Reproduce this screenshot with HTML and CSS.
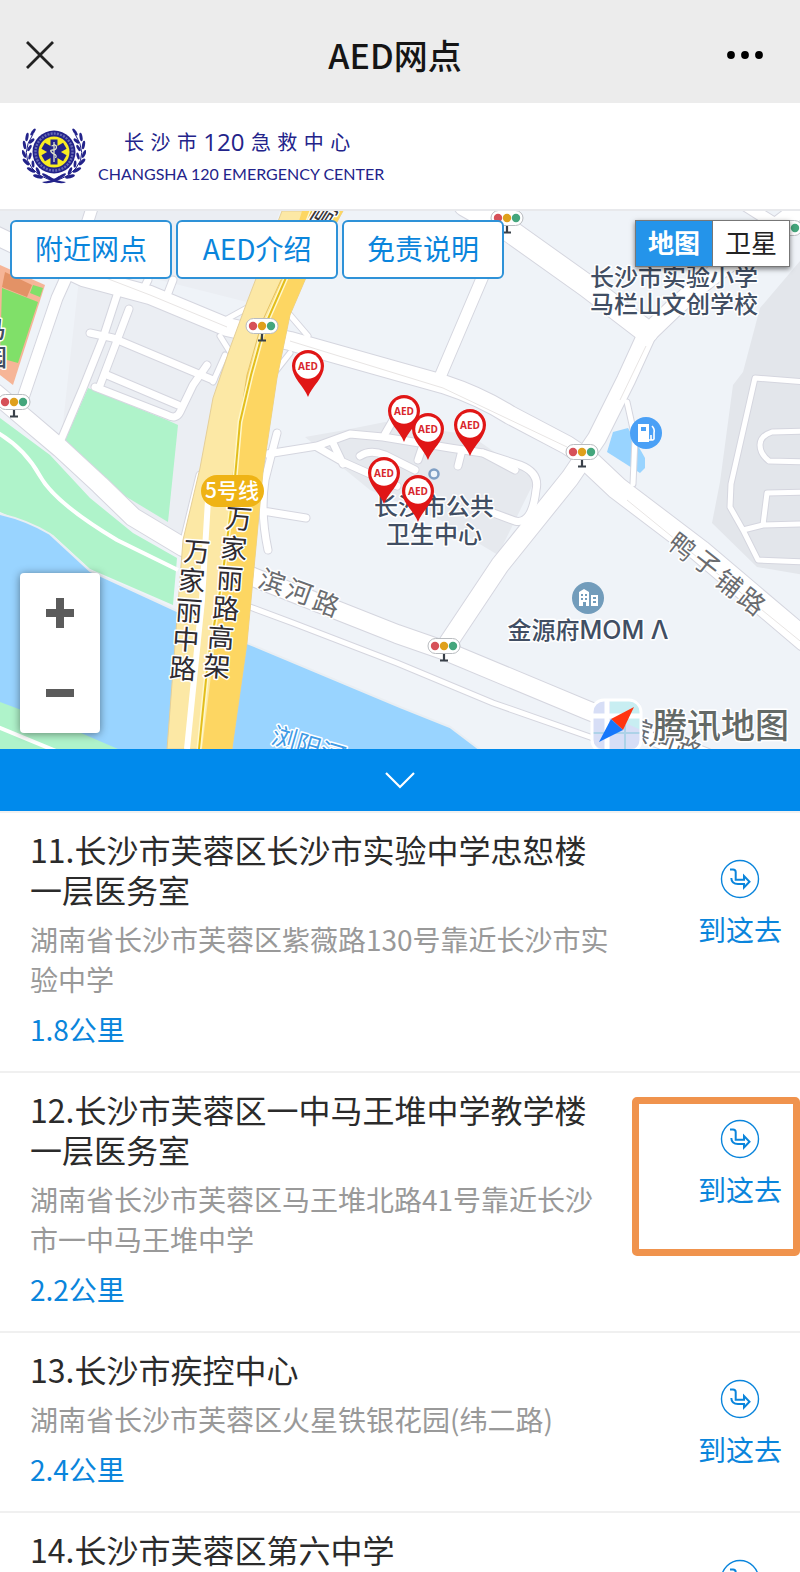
FILE: index.html
```
<!DOCTYPE html>
<html lang="zh-CN">
<head>
<meta charset="utf-8">
<meta name="viewport" content="width=device-width, initial-scale=1">
<title>AED网点</title>
<link rel="stylesheet" href="styles.css">
</head>
<body>
<header class="topbar">
  <button class="icon-btn" type="button" aria-label="关闭">
    <svg width="28" height="28" viewBox="0 0 28 28"><path d="M1 1 27 27M27 1 1 27" fill="none" stroke="#222" stroke-width="2.8"/></svg>
  </button>
  <h1 class="topbar-title">AED网点</h1>
  <button class="icon-btn icon-btn-end" type="button" aria-label="更多">
    <svg width="38" height="10" viewBox="0 0 38 10"><circle cx="5" cy="5" r="3.9"/><circle cx="19" cy="5" r="3.9"/><circle cx="33" cy="5" r="3.9"/></svg>
  </button>
</header>

<div class="brand">
  <svg class="brand-emblem" width="64" height="56" viewBox="0 0 64 56">
    <g id="wreath" fill="#23238a">
      <path d="M11 6Q-2 26 10 40Q18 50 33 53" fill="none" stroke="#23238a" stroke-width="1"/>
      <ellipse cx="11" cy="4" rx="1.5" ry="4" transform="rotate(35 11 4)"/>
      <ellipse cx="5" cy="9" rx="1.5" ry="4.2" transform="rotate(10 5 9)"/>
      <ellipse cx="9.500" cy="13" rx="1.500" ry="3.600" transform="rotate(50 9.500 13)"/>
      <ellipse cx="2.500" cy="17" rx="1.500" ry="4.200" transform="rotate(-10 2.500 17)"/>
      <ellipse cx="7.500" cy="20" rx="1.400" ry="3.600" transform="rotate(30 7.500 20)"/>
      <ellipse cx="2" cy="26" rx="1.500" ry="4.200" transform="rotate(-25 2 26)"/>
      <ellipse cx="8" cy="28" rx="1.400" ry="3.600" transform="rotate(15 8 28)"/>
      <ellipse cx="4" cy="34" rx="1.600" ry="4.400" transform="rotate(-45 4 34)"/>
      <ellipse cx="11" cy="36" rx="1.400" ry="3.600" transform="rotate(-5 11 36)"/>
      <ellipse cx="9" cy="42" rx="1.600" ry="4.600" transform="rotate(-62 9 42)"/>
      <ellipse cx="16" cy="43" rx="1.500" ry="4" transform="rotate(-25 16 43)"/>
      <ellipse cx="16" cy="48.500" rx="1.800" ry="5" transform="rotate(-76 16 48.500)"/>
      <ellipse cx="24" cy="48" rx="1.500" ry="4.500" transform="rotate(-58 24 48)"/>
      <path d="M20 54Q30 53 37 48L39 50Q32 56 22 55Z"/>
    </g>
    <use href="#wreath" transform="matrix(-1 0 0 1 64 0)"/>
    <circle cx="32" cy="24" r="21.500" fill="#23238a"/>
    <circle cx="32" cy="24" r="18.500" fill="none" stroke="#6569b5" stroke-width="2.400" stroke-dasharray="2 1.200"/>
    <circle cx="32" cy="24" r="15.500" fill="#f8ec22"/>
    <g fill="#23238a"><path id="bar" d="M28.500 11.500h7v25h-7z"/><use href="#bar" transform="rotate(60 32 24)"/><use href="#bar" transform="rotate(120 32 24)"/></g>
    <path d="M32 14v20M29.500 18q5-2 5 1t-4 3 1 4q4 1 2 4" fill="none" stroke="#dfe2c8" stroke-width="1.300"/>
  </svg>
  <div class="brand-names">
    <div class="brand-cn"><span>长</span><span>沙</span><span>市</span><span class="brand-num">120</span><span>急</span><span>救</span><span>中</span><span>心</span></div>
    <div class="brand-en">CHANGSHA 120 EMERGENCY CENTER</div>
  </div>
</div>

<main>
<section class="map" aria-label="地图">
  <svg class="map-canvas" viewBox="0 211 800 538" preserveAspectRatio="xMidYMid slice">
    <defs>
      <g id="roads">
        <g class="w22">
          <path d="M465 205 507 229 587 286 647 332"/>
          <path d="M582 455 617 488 700 551 805 640"/>
        </g>
        <g class="w20">
          <path d="M-5 235 83 277 150 295 227 327 290 341 400 372 443 384Q480 396 510 415L567 445 582 455"/>
          <path d="M805 205 700 285 673 309 647 334 626 380 597 438 570 478 500 565 446 646"/>
          <path d="M-5 393 27 420 60 448 100 485 133 517 183 547 253 577 397 634 443 650 587 710 705 757"/>
        </g>
        <g class="w12">
          <path d="M93 205 85 230M66 278 57 298 24 395"/>
          <path d="M483 276 440 377M745 205 772 222"/>
        </g>
        <g class="w8">
          <path d="M117 295 103 338 83 388 58 447"/>
          <path d="M129 309 118 338 99 388M90 333 113 338 213 380"/>
          <path d="M207 365 193 385 180 412Q176 420 167 415L95 387M107 375 178 405M173 280 168 293M148 280 143 290"/>
          <path d="M277 433 272 452 265 480Q260 512 268 550M263 511 306 518"/>
          <path d="M267 454 317 446 350 434 383 437 450 448 483 453 515 470"/>
          <path d="M317 447 343 462 397 486M333 443 343 464M360 456Q370 449 385 455L415 470M462 450 458 466M422 448 418 460M385 434 396 415"/>
          <path d="M483 453 520 465Q540 473 536 490Q532 525 515 521L488 511"/>
          <path d="M200 475 183 545"/>
        </g>
        <g class="w5">
          <path d="M627 402 635 438 633 484"/>
          <path d="M805 382 755 378 731 484 730 507 743 530 758 560 805 562M743 530 763 525 805 524M763 525 767 493 805 492"/>
          <path d="M805 431 772 432Q760 436 760 445T769 461L805 462"/>
          <path d="M250 607 293 623 397 663 493 703 593 738"/>
          <path d="M227 319 247 308M220 336 230 352M290 315 308 336M275 372 290 353M213 382 225 355"/>
        </g>
      </g>
      <g id="signal">
        <path d="M0 7V14M-4 14.500H4" stroke="#394049" stroke-width="2.200"/>
        <rect x="-16" y="-7.500" width="32" height="15" rx="7.500" fill="#fff" stroke="#b9bcc0" stroke-width="1"/>
        <circle cx="-9" r="4.200" fill="#d65058"/><circle r="4.200" fill="#dfa01c"/><circle cx="9" r="4.200" fill="#44a67c"/>
      </g>
      <path id="metro" d="M312 211 285 280 264 328 251 375 240 422 235 478 222 580 208 660 199 749"/>
      <g id="pin"><path d="M0 31C-4 20-16 12-16 0A16 16 0 0 1 16 0C16 12 4 20 0 31Z" fill="#e01616"/><circle r="12.800" fill="#fff"/></g>
    </defs>
    <rect y="211" width="800" height="538" fill="#eff3f8"/>
    <path d="M80 270 240 330 180 540 60 450ZM0 211H280L247 302 80 260 0 230Z" fill="#ebeef3"/>
    <path d="M805 255 760 308 743 372 733 385 720 482 712 523 757 567 805 575Z" fill="#e3e6eb"/>
    <path d="M305 437 345 430 385 422 470 435 535 480 498 555 440 520 370 490Z" fill="#e6e9ee"/>
    <path d="M0 265 45 285 13 385 0 375Z" fill="#f6b597"/>
    <path d="M5 272 32 285 27 297 2 287Z" fill="#e39266"/>
    <path d="M2 288 38 302 18 363 0 358ZM33 285 43 288 40 297 30 293Z" fill="#80e069"/>
    <path d="M88 388 167 420 178 425 168 522 110 487 63 445Z" fill="#aff3ca"/>
    <path d="M0 418 50 455 90 498 133 533 177 558 173 605 90 569 53 535 0 512Z" fill="#aff3ca"/>
    <path d="M-5 513Q25 519 50 534L90 571 177 611 247 643 400 707 450 727 487 755H-5Z" fill="#99d4ff" stroke="#e9eef3" stroke-width="2"/>
    <path d="M0 702 67 727 118 749H0Z" fill="#aff3ca"/>
    <path d="M-2 433Q25 449 40 476T117 540L178 570M-2 727 56 751" fill="none" stroke="#fff" stroke-width="4"/>
    <path d="M613 432 628 428 645 458 645 468 640 473 607 452Z" fill="#99d4ff"/>
    <use href="#roads" class="road-edge"/>
    <use href="#roads" class="road-fill"/>
    <path d="M567 447 443 388 290 341M20 245 150 295 227 327M627 500 805 645M646 346 620 400" fill="none" stroke="#e8e5e4" stroke-width="1"/>
    <path d="M282 211 247 302 230 348 213 398 200 468 183 540 167 749H232L247 643 263 472 277 378 290 315 305 280 343 211Z" fill="#fce8a5" stroke="#e5cf98" stroke-width="1"/>
    <path d="M302 211 281 280 267 315 247 375 236 470 219 610 202 749H232L247 643 263 472 277 378 290 315 305 280 343 211Z" fill="#fdd662"/>
    <path d="M208 500 202 600 187 749" fill="none" stroke="#fff" stroke-width="6"/>
    <path d="M281 280 262 322 247 375 237 440 219 600" fill="none" stroke="#e5c260" stroke-width="1"/>
    <use href="#metro" class="metro-bed"/>
    <use href="#metro" class="metro-line"/>

    <use href="#signal" x="262" y="326"/><use href="#signal" x="14" y="402"/><use href="#signal" x="507" y="218"/>
    <use href="#signal" x="582" y="452"/><use href="#signal" x="444" y="646"/><use href="#signal" x="786" y="228"/>

    <g class="label road-name">
      <text class="dark" transform="translate(322 214) rotate(-58)">高</text>
      <text transform="translate(273 580) rotate(20)">滨</text><text transform="translate(300 590) rotate(20)">河</text><text transform="translate(327 602) rotate(20)">路</text>
      <text transform="translate(683 545) rotate(38)">鸭</text><text transform="translate(708 562) rotate(38)">子</text><text transform="translate(730 582) rotate(38)">铺</text><text transform="translate(753 600) rotate(38)">路</text>
      <text transform="translate(640 728) rotate(20)">滨</text><text transform="translate(664 738) rotate(20)">河</text><text transform="translate(689 748) rotate(20)">路</text>
    </g>
    <g class="label highway-name">
      <text transform="translate(239 517) rotate(4)">万</text><text transform="translate(234 547) rotate(4)">家</text><text transform="translate(230 577) rotate(4)">丽</text><text transform="translate(226 607) rotate(4)">路</text><text transform="translate(221 636) rotate(4)">高</text><text transform="translate(217 665) rotate(4)">架</text>
      <text transform="translate(197 550) rotate(4)">万</text><text transform="translate(192 579) rotate(4)">家</text><text transform="translate(189 609) rotate(4)">丽</text><text transform="translate(186 638) rotate(4)">中</text><text transform="translate(183 667) rotate(4)">路</text>
    </g>
    <g class="label river-name"><text transform="translate(285 736) rotate(16)">浏</text><text transform="translate(309 744) rotate(16)">阳</text><text transform="translate(333 752) rotate(16)">河</text></g>
    <rect x="201" y="475" width="63" height="32" rx="16" fill="#efb315"/>
    <text class="line-name" x="232" y="498">5号线</text>
    <g class="label place-name">
      <text x="674" y="286">长沙市实验小学</text><text x="674" y="313">马栏山文创学校</text>
      <text x="434" y="515">长沙市公共</text><text x="434" y="543">卫生中心</text>
      <text x="588" y="639">金源府<tspan class="latin">MOM Λ</tspan></text>
      <text x="-6" y="338">马</text><text x="-5" y="366">园</text>
    </g>
    <circle cx="434" cy="474" r="4.500" fill="#eef4fa" stroke="#7f9fc4" stroke-width="2.500"/>
    <g transform="translate(646 433)"><circle r="16" fill="#4aa0f6"/><path d="M-8-9H3V9H-8Z" fill="#fff"/><path d="M-5-6H0V-2H-5Z" fill="#4aa0f6"/><path d="M3 7H5V2M6-7Q9-4 8 0V6Q7 8 5 6" fill="none" stroke="#fff" stroke-width="1.600"/></g>
    <g transform="translate(588 598)"><circle r="16" fill="#729cbb"/><path d="M-9 8V-6L-4-9 1-6V8H-2V4H-5V8ZM3 8V-3H10V8Z" fill="#fff"/><path d="M-7-3H-5M-3-3H-1M-7 1H-5M-3 1H-1M5 0H8M5 4H8" stroke="#729cbb" stroke-width="2"/></g>

    <g class="pins">
      <g transform="translate(308 366)"><use href="#pin"/><text y="4">AED</text></g>
      <g transform="translate(404 411)"><use href="#pin"/><text y="4">AED</text></g>
      <g transform="translate(428 429)"><use href="#pin"/><text y="4">AED</text></g>
      <g transform="translate(470 425)"><use href="#pin"/><text y="4">AED</text></g>
      <g transform="translate(384 473)"><use href="#pin"/><text y="4">AED</text></g>
      <g transform="translate(418 491)"><use href="#pin"/><text y="4">AED</text></g>
    </g>

    <rect x="592" y="699" width="50" height="50" rx="12" fill="#d7def6"/>
    <path d="M610 700H630Q641 700 641 711V730L610 716Z" fill="#c8eef2"/>
    <path d="M607 700V749M592 716H641" stroke="#fff" stroke-width="5"/>
    <path d="M592 733H641M625 725V749" stroke="#add2e8" stroke-width="2"/>
    <rect x="592" y="700" width="49" height="52" rx="12" fill="none" stroke="#fff" stroke-width="3"/>
    <path d="M634 707 611 719 623 730Z" fill="#ff3510"/><path d="M599 742 611 719 623 730Z" fill="#1677fb"/>
    <text class="label map-credit" x="721" y="738">腾讯地图</text>
  </svg>
  <div class="map-tools">
    <nav class="tabs">
      <button type="button" class="tab">附近网点</button>
      <button type="button" class="tab">AED介绍</button>
      <button type="button" class="tab">免责说明</button>
    </nav>
    <div class="map-type">
      <button type="button" class="type-btn is-active" aria-pressed="true">地图</button>
      <button type="button" class="type-btn" aria-pressed="false">卫星</button>
    </div>
  </div>
  <div class="zoom">
    <button type="button" class="zoom-btn" aria-label="放大"><svg width="28" height="30" viewBox="0 0 28 30"><path d="M14 0V30M0 15H28" stroke="#5b5b5b" stroke-width="8"/></svg></button>
    <button type="button" class="zoom-btn" aria-label="缩小"><svg width="28" height="30" viewBox="0 0 28 30"><path d="M0 15H28" stroke="#5b5b5b" stroke-width="8"/></svg></button>
  </div>
</section>

<button type="button" class="collapse" aria-label="收起列表">
  <svg width="30" height="18" viewBox="0 0 30 18"><path d="M1 2 15 16 29 2" fill="none" stroke="#fff" stroke-width="2.200"/></svg>
</button>

<svg width="0" height="0" class="sprite"><symbol id="go" viewBox="0 0 40 40"><g fill="none" stroke="#0a85dc"><circle cx="20" cy="20" r="18.500" stroke-width="1.400"/><path d="M10 10.500H13Q15.700 10.500 15.700 13V20.800H24V17L29.500 22.700 24 28.500V25H18Q11.500 25 11.300 19" stroke-width="2"/></g></symbol></svg>

<ul class="sites">
  <li class="site">
    <div class="site-text">
      <h2 class="site-name">11.长沙市芙蓉区长沙市实验中学忠恕楼一层医务室</h2>
      <p class="site-address">湖南省长沙市芙蓉区紫薇路130号靠近长沙市实验中学</p>
      <p class="site-distance">1.8公里</p>
    </div>
    <a class="go" href="#"><svg class="go-icon"><use href="#go"/></svg>到这去</a>
  </li>
  <li class="site site-marked">
    <div class="site-text">
      <h2 class="site-name">12.长沙市芙蓉区一中马王堆中学教学楼一层医务室</h2>
      <p class="site-address">湖南省长沙市芙蓉区马王堆北路41号靠近长沙市一中马王堆中学</p>
      <p class="site-distance">2.2公里</p>
    </div>
    <a class="go" href="#"><svg class="go-icon"><use href="#go"/></svg>到这去</a>
  </li>
  <li class="site">
    <div class="site-text">
      <h2 class="site-name">13.长沙市疾控中心</h2>
      <p class="site-address">湖南省长沙市芙蓉区火星铁银花园(纬二路)</p>
      <p class="site-distance">2.4公里</p>
    </div>
    <a class="go" href="#"><svg class="go-icon"><use href="#go"/></svg>到这去</a>
  </li>
  <li class="site">
    <div class="site-text">
      <h2 class="site-name">14.长沙市芙蓉区第六中学</h2>
    </div>
    <a class="go" href="#"><svg class="go-icon"><use href="#go"/></svg>到这去</a>
  </li>
</ul>
</main>
</body>
</html>
```
FILE: styles.css
```
*, *::after { box-sizing: border-box; }
body {
  display: flex;
  flex-direction: column;
  margin: 0;
  height: 100vh;
  background: #fff;
  color: #2b2b2b;
  font-family: "Noto Sans CJK SC", sans-serif;
}
button { margin: 0; padding: 0; border: 0; background: none; font: inherit; color: inherit; cursor: pointer; }
h1, h2, p, ul { margin: 0; padding: 0; }
svg { display: block; }
main { flex: 1; min-height: 0; overflow-y: auto; scrollbar-width: none; }

.topbar {
  display: grid;
  grid-template-columns: 1fr auto 1fr;
  align-items: center;
  padding: 31px 36px 24px 26px;
  background: #ececec;
}
.icon-btn { display: flex; align-items: center; justify-self: start; height: 48px; }
.icon-btn-end { justify-self: end; }
.topbar-title { font-size: 34px; line-height: 48px; font-weight: 500; color: #151515; }

.brand {
  display: flex;
  flex: none;
  align-items: flex-start;
  gap: 12px;
  height: 108px;
  padding: 25px 22px 0;
  border-bottom: 2px solid #e8e9ec;
  color: #23238a;
}
.brand-cn {
  display: flex;
  justify-content: space-between;
  padding: 0 34px 0 26px;
  font-size: 20px;
  line-height: 28px;
}
.brand-num { font-family: "Open Sans", sans-serif; font-size: 24px; }
.brand-en { padding-top: 2px; font-family: Lato, sans-serif; font-size: 16px; line-height: 32px; }

.map { position: relative; aspect-ratio: 800 / 538; overflow: hidden; }
.map-canvas { width: 100%; height: 100%; }
.map-tools {
  position: absolute;
  inset: 9px 10px auto;
  display: flex;
  justify-content: space-between;
  align-items: flex-start;
}
.tabs { display: flex; gap: 4px; }
.tab {
  padding: 0 23px 2px;
  min-width: 162px;
  border: 2px solid #2e92d8;
  border-radius: 6px;
  background: #fff;
  color: #0a85dc;
  font-size: 28px;
  line-height: 53px;
}
.map-type { display: flex; border: 1px solid #777; box-shadow: 0 2px 5px rgba(0, 0, 0, .5); }
.type-btn { padding: 0 12px 4px; background: #fff; color: #222; font-size: 26px; line-height: 41px; }
.type-btn.is-active { border-right: 1px solid #777; background: #2494ea; color: #fff; font-weight: 700; }
.zoom {
  position: absolute;
  left: 20px;
  bottom: 16px;
  border-radius: 4px;
  background: #fff;
  box-shadow: 0 1px 8px rgba(0, 0, 0, .45);
}
.zoom-btn { display: flex; align-items: center; justify-content: center; width: 80px; height: 80px; }

.road-edge { --edge: 2px; stroke: #d5d6df; }
.road-fill { --edge: 0px; stroke: #fff; }
#roads { fill: none; stroke-linecap: round; stroke-linejoin: round; }
.w22 { stroke-width: calc(22px + var(--edge)); }
.w20 { stroke-width: calc(18px + var(--edge)); }
.w12 { stroke-width: calc(11px + var(--edge)); }
.w8 { stroke-width: calc(7px + var(--edge)); }
.w5 { stroke-width: calc(5px + var(--edge)); }
.metro-bed { fill: none; stroke: #fff7c9; stroke-width: 5px; }
.metro-line { fill: none; stroke: #e3be1c; stroke-width: 2px; }

.label { text-anchor: middle; paint-order: stroke; stroke: #fff; stroke-width: 3px; stroke-linejoin: round; }
.road-name text, .highway-name text, .river-name text { dominant-baseline: central; }
.road-name { font-size: 26px; fill: #6a6c70; }
.road-name .dark { fill: #38353a; }
.highway-name { font-size: 27px; fill: #2f2c31; }
.river-name { font-size: 25px; fill: #3f9be6; }
.place-name { font-size: 24px; font-weight: 500; fill: #414e63; }
.latin { font-family: Inter, sans-serif; font-size: 25px; }
.line-name { font-size: 21px; font-weight: 500; fill: #fff; text-anchor: middle; }
.map-credit { font-size: 34px; font-weight: 500; fill: #636966; }
.pins text { font-family: "Open Sans", sans-serif; font-size: 10px; font-weight: 700; fill: #d8262b; text-anchor: middle; }

.collapse {
  display: flex;
  align-items: center;
  justify-content: center;
  width: 100%;
  height: 62px;
  background: #008aec;
}

.sprite { position: absolute; }
.sites { list-style: none; border-top: 2px solid #f1f1f1; }
.site { position: relative; display: flex; justify-content: space-between; border-bottom: 2px solid #f0f0f0; }
.site-text { flex: 1; padding: 16px 66px 22px 30px; }
.site-name { font-size: 32px; line-height: 40px; font-weight: 400; }
.site-address { margin-top: 10px; font-size: 28px; line-height: 40px; color: #999; }
.site-distance { margin-top: 10px; font-size: 28px; line-height: 40px; color: #0a85dc; }
.go {
  display: flex;
  flex-direction: column;
  align-items: center;
  gap: 10px;
  width: 120px;
  padding-top: 46px;
  color: #0a85dc;
  font-size: 28px;
  line-height: 40px;
  text-decoration: none;
}
.go-icon { width: 40px; height: 40px; }
.site-marked::after {
  content: "";
  position: absolute;
  top: 24px;
  right: 0;
  width: 168px;
  height: 159px;
  border: 7px solid #f0934d;
  border-radius: 5px;
  pointer-events: none;
}
```
